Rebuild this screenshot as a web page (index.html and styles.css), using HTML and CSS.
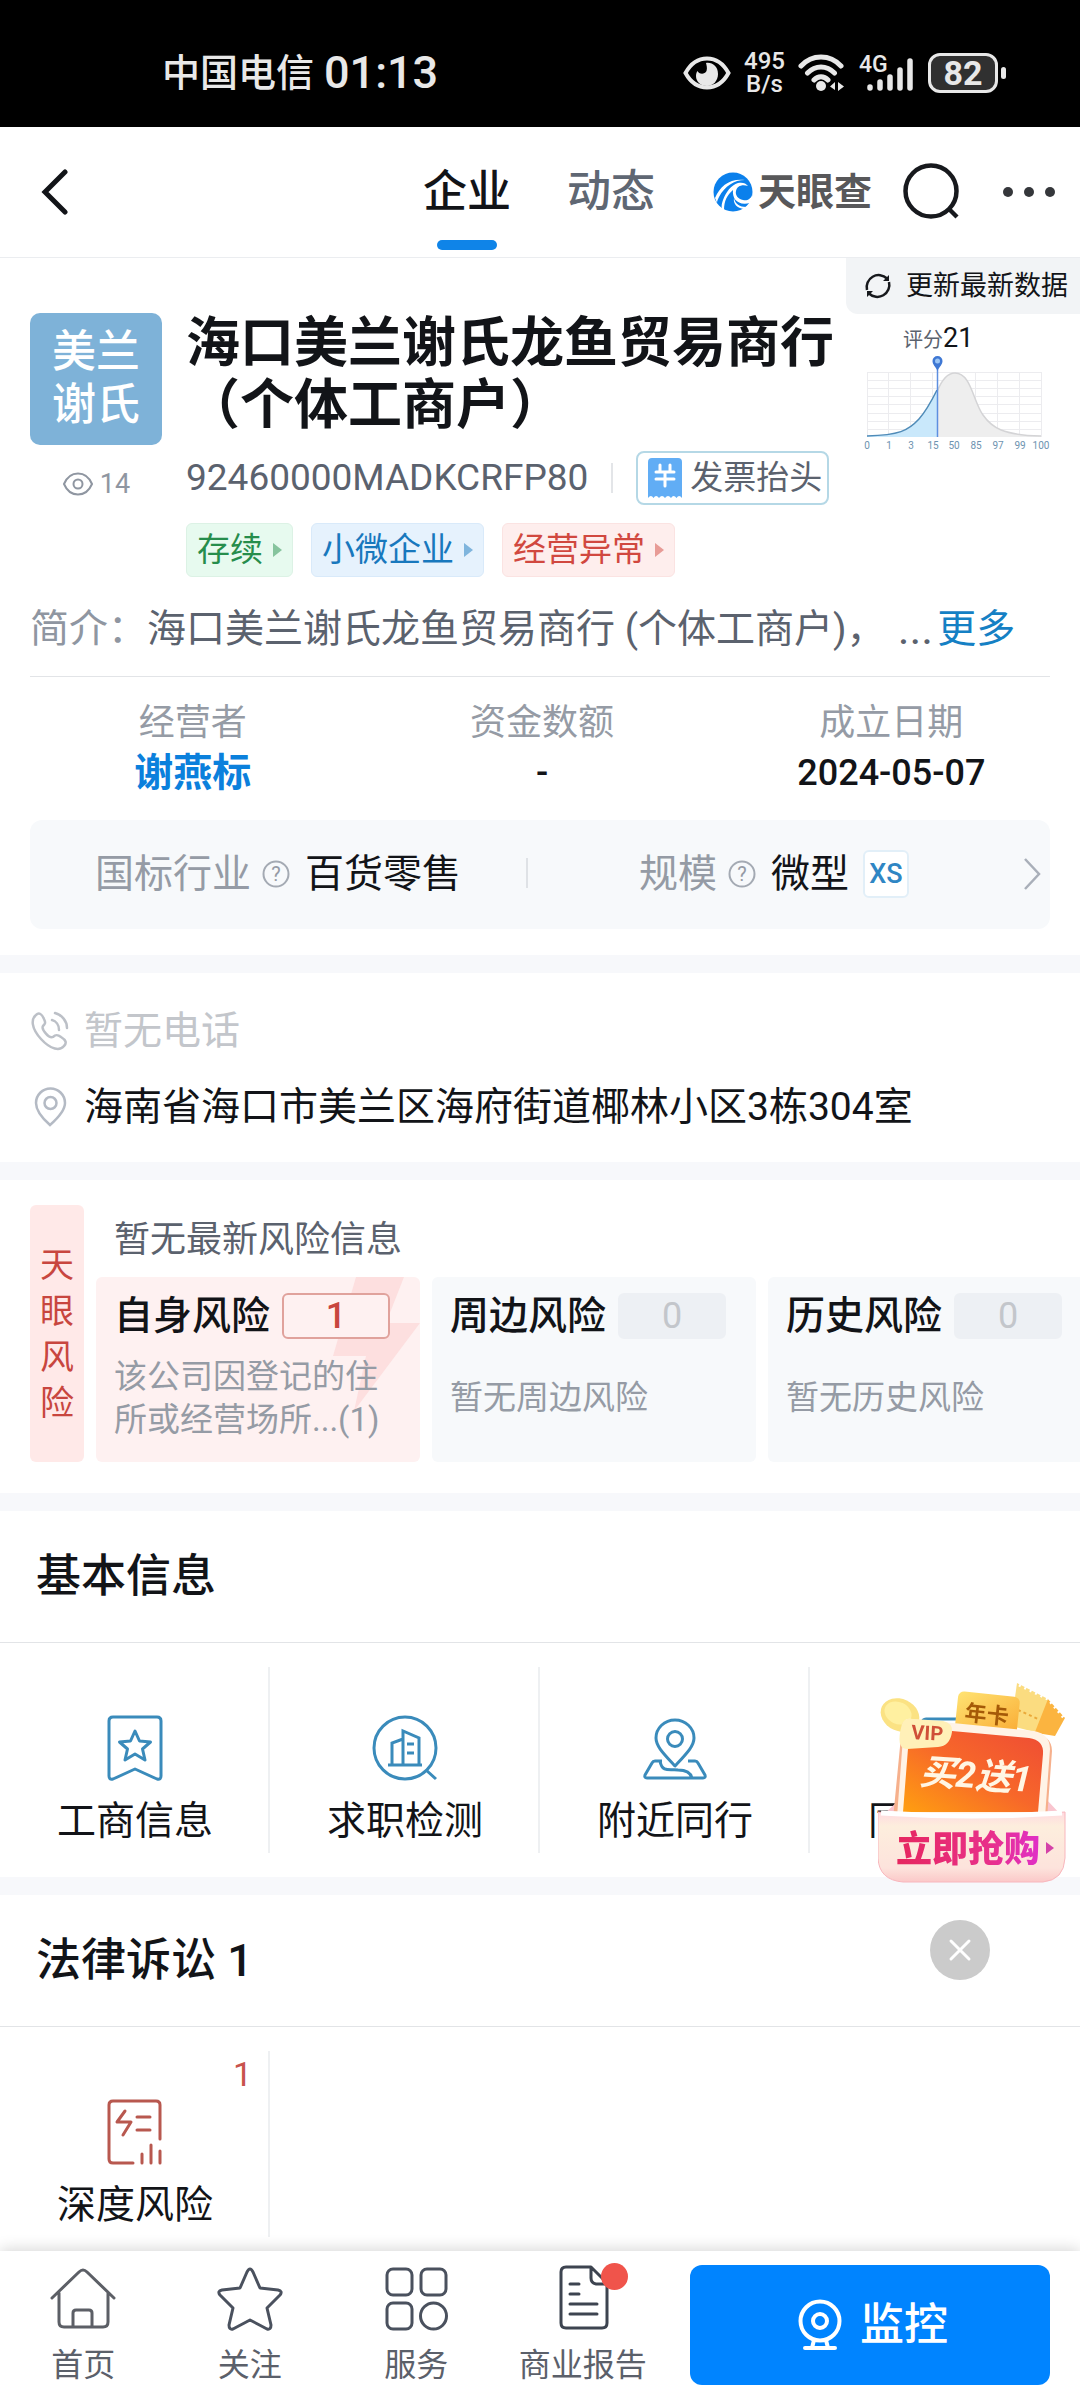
FILE: index.html
```html
<!DOCTYPE html>
<html lang="zh-CN">
<head>
<meta charset="utf-8">
<meta name="viewport" content="width=device-width, initial-scale=1">
<title>海口美兰谢氏龙鱼贸易商行（个体工商户）</title>
<link rel="stylesheet" href="styles.css">
</head>
<body>
<div class="page">
  <div class="status">
    <div class="status-left"><span class="carrier">中国电信</span><span class="clock">01:13</span></div>
    <div class="status-right">
      <svg width="48" height="36" viewBox="0 0 48 36" fill="none"><path d="M2.500 18C8 8 15.500 3.500 24 3.500S40 8 45.500 18C40 28 32.500 32.500 24 32.500S8 28 2.500 18z" stroke="#e8e8e8" stroke-width="4"/><path d="M23 8c6-1 12 3 12 11 0 7-5 12-11 12s-11-4-11-10c0-2 .5-4 1.500-5 1 3 7 4 9 0 1-3 0-6-.5-8z" fill="#e8e8e8"/></svg>
      <div class="speed"><span>495</span><span>B/s</span></div>
      <svg width="48" height="40" viewBox="0 0 48 40" fill="none" stroke="#e8e8e8" stroke-width="5" stroke-linecap="round"><path d="M3 13C14 1 32 1 43 13M9.500 20c8-8 19-8 27 0M16 27c4-4.500 10-4.500 14 0"/><circle cx="23" cy="33" r="5" fill="#e8e8e8" stroke="none"/><path d="M37 29v8l-5-3.500zM40 29v9l6-4.500z" fill="#e8e8e8" stroke="none"/></svg>
      <svg width="56" height="48" viewBox="0 -4 56 48" stroke="#e8e8e8" stroke-width="5.500" stroke-linecap="round"><text class="net" x="0" y="19" stroke="none">4G</text><path d="M11 34v1M21 29v6M31 24v11M41 17v18M51 8v27"/></svg>
      <div class="battery"><span class="battery-level">82</span><span class="battery-tip"></span></div>
    </div>
  </div>

  <header class="nav">
    <button class="back" aria-label="返回"><svg width="28" height="48" viewBox="0 0 28 48" fill="none" stroke="#121418" stroke-width="5" stroke-linecap="round"><path d="M25 4 5 24l20 20"/></svg></button>
    <nav class="tabs">
      <a class="tab active" href="#company">企业</a>
      <a class="tab" href="#news">动态</a>
    </nav>
    <a class="brand" href="#home">
      <svg width="42" height="42" viewBox="0 0 42 42"><circle cx="21" cy="21" r="19.500" fill="#0b80ec"/><path d="M9 10C17 4 27 4 36 9 26 7 18 9 12 13 8 16 5 20 2 26 2 19 4 14 9 10z" fill="#0b80ec"/><path d="M3 27C8 15 18 7 33 9c-11 0-20 6-26 17-1 2-2 4-2 6zM40 24c-1 4-5 6-9 5-5-1-8-5-7-9 1-5 6-7 12-5-2-3-6-4-10-3-7 2-12 9-15 17-1 3-2 6-1 9l2 1c0-9 3-15 9-20-1 9 5 16 17 13l2-4z" fill="#fff"/><path d="M22 27c1 6 6 9 12 9l-2 2c-7-1-11-5-10-11z" fill="#fff"/></svg>
      <span>天眼查</span>
    </a>
    <button class="search" aria-label="搜索"><svg width="58" height="58" viewBox="0 0 58 58" fill="none" stroke="#17191d" stroke-width="4.500"><circle cx="28" cy="28" r="25.500"/><path d="m46 46 8 8"/></svg></button>
    <button class="more" aria-label="更多"><svg width="52" height="12" viewBox="0 0 52 12" fill="#35373b"><circle cx="5" cy="6" r="5"/><circle cx="26" cy="6" r="5"/><circle cx="47" cy="6" r="5"/></svg></button>
  </header>

  <main class="content">
    <section class="company" id="company">
      <button class="refresh">
        <svg width="28" height="28" viewBox="0 0 28 28" fill="none" stroke="#17191d" stroke-width="2.500"><path d="M3 18A12 12 0 0 1 23 6.500M25 10A12 12 0 0 1 5 21.500"/><path d="M25 3v6h-6zM3 25v-6h6z" fill="#17191d" stroke="none"/></svg>
        更新最新数据
      </button>
      <div class="company-head">
        <div class="avatar-col">
          <div class="avatar">美兰<br>谢氏</div>
          <div class="views"><svg width="32" height="26" viewBox="0 0 32 26" fill="none" stroke="#8f96a1" stroke-width="2"><path d="M2 13C5 6 10 2.500 16 2.500S27 6 30 13c-3 7-8 10.500-14 10.500S5 20 2 13z"/><circle cx="16" cy="13" r="4.500"/></svg>14</div>
        </div>
        <div class="company-main">
          <h1>海口美兰谢氏龙鱼贸易商行（个体工商户）</h1>
          <div class="code-row">
            <span>92460000MADKCRFP80</span>
            <button class="invoice"><svg width="34" height="40" viewBox="0 0 34 40"><path d="M0 4q0-4 4-4h26q4 0 4 4v36q-3-4-5.500 0-3-4-5.500 0-3-4-6 0-3-4-6 0-3-4-5.500 0-2.500-4-5.500 0z" fill="#61adf5"/><path d="M12 7v6M22 7v6M8 14h18M8 21h18M17 14v14" stroke="#fff" stroke-width="3" fill="none" stroke-linecap="round"/></svg>发票抬头</button>
          </div>
          <div class="tags">
            <a class="tag green" href="#status">存续</a>
            <a class="tag blue" href="#small">小微企业</a>
            <a class="tag red" href="#abnormal">经营异常</a>
          </div>
        </div>
        <div class="score">
          <div class="score-label">评分<b>21</b></div>
          <svg width="190" height="96" viewBox="860 354 190 96">
            <path d="M867.500 370.500h174M867.500 378.500h174M867.500 386.500h174M867.500 394.500h174M867.500 402.500h174M867.500 411.500h174M867.500 419.500h174M867.500 427.500h174M867.500 370v65M888.500 370v65M910.500 370v65M932.500 370v65M954.500 370v65M975.500 370v65M997.500 370v65M1019.500 370v65M1041.500 370v65" stroke="#ececef" fill="none"/>
            <path d="M937 390C942 377 948 371 955 371c16 0 18 28 28 42 9 13 20 20 58 21v1H937z" fill="#eee"/>
            <path d="M867 434c32-1 41-5 52-17 8-9 13-19 18-29v47h-70z" fill="#c9e8fb"/>
            <path d="M937 390C942 377 948 371 955 371c16 0 18 28 28 42 9 13 20 20 58 21" fill="none" stroke="#d4d4d6" stroke-width="1.500"/>
            <path d="M867 434c32-1 41-5 52-17 8-9 13-19 18-29" fill="none" stroke="#4f8bb8" stroke-width="1.500"/>
            <path d="M937.500 366v69" stroke="#5d8fe0" stroke-width="1.500"/>
            <path d="M937.500 369c-2-5-5-6-5-10a5 5 0 0 1 10 0c0 4-3 5-5 10z" fill="#3f78d4"/><circle cx="937.500" cy="359" r="2.500" fill="#9cc6f5"/>
            <g class="axis"><text x="867" y="447">0</text><text x="889" y="447">1</text><text x="911" y="447">3</text><text x="933" y="447">15</text><text x="954" y="447">50</text><text x="976" y="447">85</text><text x="998" y="447">97</text><text x="1020" y="447">99</text><text x="1041" y="447">100</text></g>
          </svg>
        </div>
      </div>

      <p class="intro"><span class="intro-label">简介：</span><span>海口美兰谢氏龙鱼贸易商行 (个体工商户)，</span><span class="dots">...</span><a href="#more">更多</a></p>

      <dl class="facts">
        <div><dt>经营者</dt><dd><a href="#owner">谢燕标</a></dd></div>
        <div><dt>资金数额</dt><dd>-</dd></div>
        <div><dt>成立日期</dt><dd>2024-05-07</dd></div>
      </dl>

      <a class="industry" href="#industry">
        <span class="half"><span class="muted">国标行业</span><svg class="help" width="28" height="28" viewBox="0 0 28 28"><circle cx="14" cy="14" r="12.500" fill="none" stroke="#a4aab3" stroke-width="2"/><text x="14" y="21">?</text></svg><span>百货零售</span></span>
        <span class="half"><span class="muted">规模</span><svg class="help" width="28" height="28" viewBox="0 0 28 28"><circle cx="14" cy="14" r="12.500" fill="none" stroke="#a4aab3" stroke-width="2"/><text x="14" y="21">?</text></svg><span>微型</span><span class="size">XS</span></span>
        <svg width="20" height="34" viewBox="0 0 20 34" fill="none" stroke="#a9afb9" stroke-width="2.500"><path d="m3 2 14 15L3 32"/></svg>
      </a>
    </section>

    <section class="contact">
      <p class="none"><svg width="40" height="40" viewBox="0 0 40 40" fill="none" stroke="#bcc0c7" stroke-width="2.500" stroke-linejoin="round" stroke-linecap="round"><path d="M6 4c3-3 6-1 8 4 2 4 1 5-1 7-2 3 6 13 10 11 2-2 4-3 8 0 5 3 6 6 3 9-4 5-13 4-23-7S1 8 6 4z"/><path d="M22 9c4 1 7 5 7 10M25 2c7 2 12 8 12 15"/></svg>暂无电话</p>
      <p><svg width="40" height="40" viewBox="0 0 40 40" fill="none" stroke="#b4bac4" stroke-width="2.500"><path d="M20 38C12 31 6 23 6 16a14.500 14.500 0 0 1 29 0c0 7-7 15-15 22z"/><circle cx="20.500" cy="16" r="6"/></svg>海南省海口市美兰区海府街道椰林小区3栋304室</p>
    </section>

    <section class="risk">
      <a class="risk-side" href="#risk">天<br>眼<br>风<br>险</a>
      <div class="risk-main">
        <p class="risk-news">暂无最新风险信息</p>
        <div class="risk-cards">
          <a class="risk-card hot" href="#self">
            <svg class="bolt" width="90" height="134" viewBox="0 0 90 134"><path d="M26 0h48L56 46h34L24 134l12-55H3z" fill="#fddfdf"/></svg>
            <span class="risk-title">自身风险<b>1</b></span>
            <span class="risk-text">该公司因登记的住<br>所或经营场所...(1)</span>
          </a>
          <a class="risk-card" href="#around"><span class="risk-title">周边风险<b>0</b></span><span class="risk-text">暂无周边风险</span></a>
          <a class="risk-card" href="#history"><span class="risk-title">历史风险<b>0</b></span><span class="risk-text">暂无历史风险</span></a>
        </div>
      </div>
    </section>

    <section class="group">
      <h2>基本信息</h2>
      <div class="cells">
        <a class="cell" href="#biz"><svg width="66" height="66" viewBox="0 0 66 66" fill="none" stroke="#3a8bbb" stroke-width="3" stroke-linejoin="round"><path d="M7 6q0-4 4-4h44q4 0 4 4v55q0 4-4 3L33 54 11 64q-4 1-4-3z"/><path d="m33 16 4.500 10 11 1-8 7 2.500 11-10-6-10 6 2.500-11-8-7 11-1z"/></svg>工商信息</a>
        <a class="cell" href="#job"><svg width="66" height="66" viewBox="0 0 66 66" fill="none" stroke="#3a8bbb" stroke-width="3"><circle cx="33" cy="33" r="31"/><path d="m54 55 10 9M16 50h34M20 50V28l11-4M31 50V16l16 7v27M35 29h7M35 38h7"/></svg>求职检测</a>
        <a class="cell" href="#near"><svg width="66" height="66" viewBox="0 0 66 66" fill="none" stroke="#3a8bbb" stroke-width="3" stroke-linejoin="round"><path d="M33 51C21 38 14 31 14 23a19 18 0 0 1 38 0c0 8-7 15-19 28z"/><circle cx="33" cy="24" r="7.500"/><path d="M20 46h-7q-2 0-3 2L3 60q-1 3 2 3h56q3 0 2-3l-7-12q-1-2-3-2h-7M18 46c2 12 10 8 18 9q12 0 14 8"/></svg>附近同行</a>
        <a class="cell" href="#peers"><svg width="66" height="66" viewBox="0 0 66 66" fill="none" stroke="#3a8bbb" stroke-width="3"><rect x="9" y="4" width="48" height="58" rx="4"/></svg>同业分析</a>
      </div>
    </section>

    <section class="group">
      <h2>法律诉讼 1</h2>
      <div class="cells">
        <a class="cell" href="#deep"><span class="count">1</span><svg width="66" height="66" viewBox="0 0 66 66" fill="none" stroke="#b8584f" stroke-width="3" stroke-linecap="round" stroke-linejoin="round"><path d="M31 64H11q-4 0-4-4V6q0-4 4-4h43q4 0 4 4v34M40 55v9M49 46v18M58 52v12M35 18h13M35 31h13M23 12 15 23h14l-8 13"/></svg>深度风险</a>
      </div>
    </section>
  </main>

  <footer class="bar">
    <a class="bar-item" href="#home"><svg width="66" height="66" viewBox="0 0 66 66" fill="none" stroke="#5c5f66" stroke-width="3" stroke-linejoin="round" stroke-linecap="round"><path d="M2 33 29 7q4-4 8 0l27 26M9 28v29q0 5 5 5h39q5 0 5-5V28M23 61V48q0-3 3-3h13q3 0 3 3v13"/></svg>首页</a>
    <a class="bar-item" href="#follow"><svg width="66" height="66" viewBox="0 0 66 66" fill="none" stroke="#4a515e" stroke-width="3" stroke-linejoin="round"><path d="M30 7q3-6 6 0l7 16 18 2q5 1 2 5L50 43l4 17q0 5-4 4L33 55 16 64q-4 1-4-4l4-17L3 30q-3-4 2-5l18-2z"/></svg>关注</a>
    <a class="bar-item" href="#service"><svg width="66" height="66" viewBox="0 0 66 66" fill="none" stroke="#4a515e" stroke-width="3"><rect x="4" y="4" width="25" height="26" rx="6"/><rect x="38" y="4" width="25" height="26" rx="6"/><rect x="4" y="38" width="25" height="26" rx="6"/><circle cx="50.500" cy="51" r="13"/></svg>服务</a>
    <a class="bar-item" href="#report"><svg width="66" height="66" viewBox="0 0 66 66" fill="none" stroke="#3d4450" stroke-width="3" stroke-linejoin="round" stroke-linecap="round"><path d="M41 2H16q-5 0-5 5v51q0 5 5 5h36q5 0 5-5V18zM41 2v11q0 5 5 6h11M20 19h9M20 29h9M20 39h27M20 49h27"/></svg>商业报告<span class="dot"></span></a>
    <button class="monitor"><svg width="44" height="52" viewBox="0 0 44 52" fill="none" stroke="#fff" stroke-width="4"><circle cx="22" cy="22" r="19.500"/><circle cx="22" cy="22" r="7"/><path d="m16 41-2 8M28 41l2 8M7 49h30" stroke-linecap="round"/></svg>监控</button>
  </footer>

  <aside class="promo">
    <a class="promo-card" href="#vip">
      <svg width="192" height="206" viewBox="0 0 192 206">
        <defs>
          <linearGradient id="g1" x1="0" y1="1" x2="1" y2="0"><stop offset="0" stop-color="#ff9f10"/><stop offset=".5" stop-color="#f7672a"/><stop offset="1" stop-color="#ee4b35"/></linearGradient>
          <linearGradient id="g2" x1="0" y1="0" x2="1" y2="1"><stop offset="0" stop-color="#ffe373"/><stop offset="1" stop-color="#f9a62e"/></linearGradient>
          <linearGradient id="g3" x1="0" y1="0" x2="0" y2="1"><stop offset="0" stop-color="#ffd9e0"/><stop offset=".2" stop-color="#fdeedd"/><stop offset=".8" stop-color="#fde3dc"/><stop offset="1" stop-color="#fbc8c8"/></linearGradient>
          <linearGradient id="g4" x1="0" y1="0" x2="1" y2="0"><stop offset="0" stop-color="#e6275f"/><stop offset=".65" stop-color="#e8308a"/><stop offset="1" stop-color="#e030c8"/></linearGradient>
        </defs>
        <path d="m169 20 18 20-10 18-24-4z" fill="#fbb440"/>
        <path d="m139 5 31 16-13 33-24-6z" fill="#fbdc80"/>
        <path d="m141 7 29 14 16 19" stroke="#fff" stroke-width="3" stroke-dasharray="2 4" fill="none"/>
        <path d="m140 32 20 9" stroke="#eaa838" stroke-width="2" stroke-dasharray="3 3"/>
        <rect x="78" y="16" width="62" height="46" rx="6" fill="url(#g2)" transform="rotate(6 110 40)"/>
        <text class="promo-year" x="86" y="42" transform="rotate(6 86 42)">年卡</text>
        <ellipse cx="22" cy="37" rx="20" ry="16" transform="rotate(25 22 37)" fill="#fbe283"/><ellipse cx="20" cy="35" rx="14" ry="11" transform="rotate(25 20 35)" fill="#fff0a0"/>
        <path d="M3 139 22 121h146l17 18z" fill="#f9c5cf"/>
        <path d="M24 48q0-6 8-5l124 12q18 3 18 18l-5 68H15z" fill="#f6b08c"/>
        <path d="M26 46q0-6 8-5l122 12q16 3 16 18l-5 68H19z" fill="#fff3e6"/>
        <path d="M31 58q0-9 10-8l110 10q15 2 14 16l-5 58H25z" fill="url(#g1)"/>
        <path d="M24 46q2-6 11-5l30 2q10 2 9 11-2 14-14 15l-31 2q-12 0-5-25z" fill="#fff0b8"/>
        <text class="promo-vip" x="33" y="61" transform="rotate(3 33 61)">VIP</text>
        <text class="promo-deal" x="41" y="106" transform="rotate(4 41 106)">买2送1</text>
        <path d="M0 134q94 8 187 0v46q-1 22-22 24H25q-24-2-25-24z" fill="url(#g3)" stroke="#f8b6bd"/>
        <path d="M3 135q91 6 181 0" stroke="#fff" stroke-width="5" fill="none"/>
        <text class="promo-buy" x="18" y="184" fill="url(#g4)">立即抢购</text>
        <path d="m168 164 8 6-8 6z" fill="#d442a8"/>
      </svg>
    </a>
    <button class="promo-close" aria-label="关闭"><svg width="24" height="24" viewBox="0 0 24 24" stroke="#fff" stroke-width="3" stroke-linecap="round"><path d="m3 3 18 18M21 3 3 21"/></svg></button>
  </aside>
</div>
</body>
</html>
```
FILE: styles.css
```css
* { box-sizing: border-box; }
body, h1, h2, p, dl, dd { margin: 0; }
body {
  font-family: Roboto, "Noto Sans CJK SC", sans-serif;
  font-size: 39px;
  line-height: 56px;
  color: #121418;
  background: #fff;
}
a { color: inherit; text-decoration: none; }
button { font: inherit; color: inherit; background: none; border: 0; padding: 0; }
svg { display: block; flex: none; }

.page { position: relative; display: flex; flex-direction: column; min-height: 100vh; }
.content { flex: 1; overflow: hidden; padding-bottom: 14px; }

/* status bar */
.status {
  display: flex; align-items: center; justify-content: space-between;
  padding: 45px 74px 26px 162px; background: #000; color: #e8e8e8;
}
.status-left, .status-right { display: flex; align-items: center; }
.status-left { gap: 10px; }
.carrier { font-size: 38px; font-weight: 500; }
.clock { font-size: 45px; font-weight: 500; }
.status-right { gap: 13px; }
.speed { display: flex; flex-direction: column; align-items: center; font-size: 24px; line-height: 23px; font-weight: 500; }
.net { font-size: 23px; font-weight: 500; fill: #e8e8e8; }
.battery { display: flex; align-items: center; gap: 3px; }
.battery-level {
  width: 70px; border: 3px solid #e8e8e8; border-radius: 12px; background: #303030;
  font-size: 34px; line-height: 34px; font-weight: 700; text-align: center;
}
.battery-tip { width: 5px; height: 12px; border-radius: 3px; background: #e8e8e8; }

/* top navigation */
.nav { display: flex; align-items: center; padding: 0 25px 0 40px; border-bottom: 1px solid #ebedf0; }
.tabs { display: flex; gap: 56px; margin-left: auto; }
.tab { position: relative; padding: 37px 0; font-size: 44px; font-weight: 500; color: #5f6773; }
.tab.active { color: #121418; }
.tab.active::after {
  content: ""; position: absolute; left: 14px; right: 14px; bottom: 7px;
  height: 10px; border-radius: 5px; background: #0f84e8;
}
.brand { display: flex; align-items: center; gap: 4px; margin-left: 57px; font-size: 38px; font-weight: 700; color: #58585a; }
.search { margin-left: 31px; }
.more { margin-left: 42px; }

/* company summary */
.company { position: relative; padding: 55px 30px 26px; }
.refresh {
  position: absolute; top: 0; right: 0; display: flex; align-items: center; gap: 14px;
  padding: 0 12px 0 18px; background: #f2f4f6; border-radius: 0 0 0 12px; font-size: 27px;
}
.company-head { display: flex; gap: 24px; }
.avatar-col { flex: none; width: 132px; }
.avatar {
  padding: 13px 0; border-radius: 10px; background: #7eb2d8; color: #fff;
  font-size: 44px; line-height: 53px; font-weight: 500; text-align: center;
}
.views { display: flex; align-items: center; justify-content: center; gap: 6px; margin-top: 22px; font-size: 27px; line-height: 34px; color: #8f96a1; }
.company-main { flex: 1; min-width: 0; }
h1 { font-size: 54px; line-height: 62px; font-weight: 700; }
.code-row { display: flex; align-items: center; margin-top: 14px; font-size: 37px; line-height: 54px; color: #5b626e; white-space: nowrap; }
.invoice {
  position: relative; display: flex; align-items: center; gap: 8px; margin-left: 48px; padding: 0 5px 0 10px;
  border: 2px solid #b5d8e6; border-radius: 8px; font-size: 33px; line-height: 50px;
}
.invoice::before { content: ""; position: absolute; left: -27px; top: 10px; width: 2px; height: 30px; background: #e3e5e8; }
.tags { display: flex; gap: 18px; margin-top: 18px; }
.tag {
  display: flex; align-items: center; gap: 10px; padding: 0 10px; border: 1px solid; border-radius: 6px;
  font-size: 33px; line-height: 52px; white-space: nowrap;
}
.tag::after { content: ""; border: solid transparent; border-width: 7px 0 7px 9px; border-left-color: currentColor; opacity: .5; }
.green { color: #268d4c; background: #e7faef; border-color: #dcf2e5; }
.blue { color: #1878bd; background: #e6f2fd; border-color: #d9eafa; }
.red { color: #d1483f; background: #feeeed; border-color: #fbe3e2; }

.score { flex: none; width: 190px; margin-left: -20px; padding-top: 10px; }
.score-label { padding-left: 43px; font-size: 20px; line-height: 31px; color: #5b626e; white-space: nowrap; }
.score-label b { font-size: 27px; font-weight: 400; color: #121418; }
.axis { font-size: 10px; fill: #6d93b0; text-anchor: middle; }

.intro { display: flex; margin-top: 24px; padding-bottom: 19px; border-bottom: 1px solid #e2e4e7; color: #5b626e; white-space: nowrap; }
.intro-label { color: #8f96a1; }
.dots { margin: 0 4px 0 12px; font-size: 45px; }
.intro a { color: #1580c4; }

.facts { display: grid; grid-template-columns: repeat(3, 1fr); margin: 0 -16px 0 -12px; padding-top: 21px; text-align: center; line-height: 50px; }
dt { font-size: 36px; color: #959ba5; }
dd { font-size: 36px; font-weight: 500; }
dd a { font-size: 39px; font-weight: 700; color: #0b80dc; }

.industry { display: flex; align-items: center; margin-top: 21px; padding: 26px 8px 27px 0; border-radius: 12px; background: #f7f9fb; }
.half { position: relative; flex: 1; display: flex; align-items: center; justify-content: center; white-space: nowrap; }
.half + .half::before { content: ""; position: absolute; left: 0; top: 12px; width: 2px; height: 30px; background: #dfe2e6; }
.muted { color: #959ba5; }
.help { margin: 0 15px 0 11px; }
.help text { font-size: 20px; fill: #959ba5; text-anchor: middle; }
.size { margin-left: 14px; width: 46px; border: 2px solid #e2eff8; border-radius: 6px; background: #fff; color: #2f86c4; font-size: 27px; line-height: 44px; font-weight: 500; text-align: center; }

/* contact */
.contact, .risk, .group { border-top: 18px solid #f7f8fb; }
.contact { padding: 30px 30px 27px; }
.contact p { display: flex; align-items: center; gap: 14px; }
.contact p + p { margin-top: 20px; }
.contact .none { color: #c3c6cb; }

/* risk */
.risk { display: flex; gap: 12px; padding: 25px 0 31px 30px; }
.risk-side {
  flex: none; display: flex; align-items: center; width: 54px; padding: 0 10px; border-radius: 6px;
  background: #ffe9e8; color: #c8463f; font-size: 34px; line-height: 46px;
}
.risk-main { flex: 1; min-width: 0; }
.risk-news { padding: 7px 18px 9px; font-size: 36px; color: #5b626e; }
.risk-cards { display: flex; gap: 12px; overflow: hidden; }
.risk-card {
  position: relative; flex: none; display: flex; flex-direction: column; width: 324px; min-height: 185px;
  padding: 11px 18px; border-radius: 6px; background: #f7f9fb;
}
.risk-title { position: relative; display: flex; align-items: center; gap: 12px; font-weight: 500; white-space: nowrap; }
.risk-title b { width: 108px; border: 2px solid #edf0f4; border-radius: 6px; background: #edf0f4; color: #c3c6cb; font-size: 36px; line-height: 42px; font-weight: 400; text-align: center; }
.risk-text { position: relative; margin: auto 0; font-size: 33px; line-height: 43px; color: #959ba5; white-space: nowrap; }
.hot { background: #fef1f1; }
.hot b { background: #fef1f1; border-color: #e0a29c; color: #c8463f; font-weight: 500; }
.bolt { position: absolute; right: 0; top: 0; }

/* grouped entries */
h2 { padding: 38px 36px 37px; border-bottom: 1px solid #e2e4e7; font-size: 45px; font-weight: 500; }
.cells { display: grid; grid-template-columns: repeat(4, 1fr); padding: 24px 0; }
.group:last-child .cells { padding-bottom: 0; }
.cell {
  position: relative; display: flex; flex-direction: column; align-items: center; gap: 14px;
  padding: 48px 0 6px 2px; border-right: 2px solid #eef0f2; line-height: 52px;
}
.cell:nth-child(4) { border-right: 0; }
.count { position: absolute; right: 16px; top: 0; font-size: 34px; line-height: 46px; color: #c8534d; }

/* bottom bar */
.bar {
  position: sticky; bottom: 0; display: flex; align-items: stretch; padding: 14px 30px 16px 0;
  background: #fff; box-shadow: 0 -2px 14px rgba(0, 0, 0, .16);
}
.bar-item { position: relative; flex: 1; display: flex; flex-direction: column; align-items: center; gap: 14px; font-size: 32px; line-height: 40px; color: #5b606a; white-space: nowrap; }
.dot { position: absolute; left: 50%; top: -2px; margin-left: 18px; width: 27px; height: 27px; border-radius: 50%; background: #f0544b; }
.monitor {
  flex: none; display: flex; align-items: center; justify-content: center; gap: 18px; width: 360px; margin-left: 24px; padding-left: 6px;
  border-radius: 12px; background: #0084ff; color: #fff; font-size: 44px; font-weight: 500;
}

/* floating promotion */
.promo { position: fixed; right: 10px; bottom: 420px; display: flex; flex-direction: column; align-items: center; }
.promo-close { display: flex; align-items: center; justify-content: center; width: 60px; height: 60px; margin: 36px 28px 0 0; border-radius: 50%; background: #cbcbcb; }
.promo-year { font-size: 22px; font-weight: 700; fill: #a55a08; }
.promo-vip { font-size: 20px; font-weight: 700; fill: #cf4f38; }
.promo-deal { font-size: 36px; font-weight: 700; font-style: italic; fill: #fff6e4; }
.promo-buy { font-size: 36px; font-weight: 900; }
```
